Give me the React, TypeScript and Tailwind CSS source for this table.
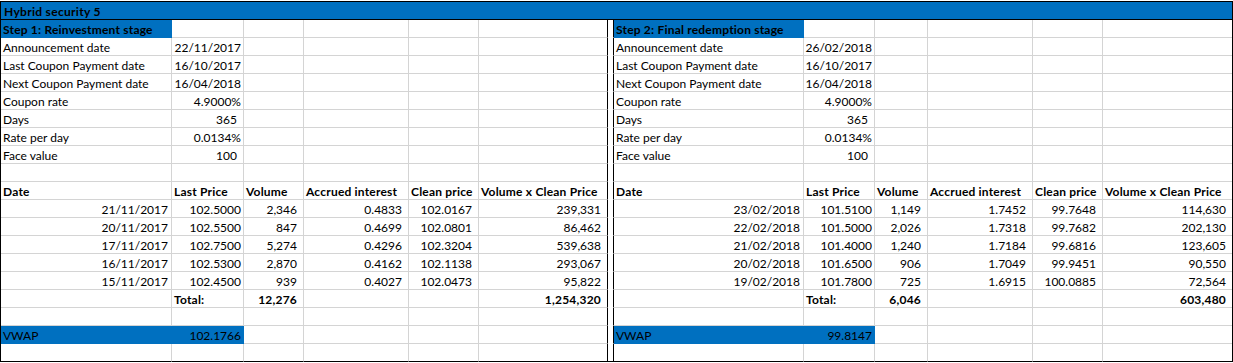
import React from "react";

type Cell = { t?: string; k?: "l" | "d" | "n" | "p"; b?: boolean; f?: boolean };

const E: Cell = {};
const l = (t: string, b = false, f = false): Cell => ({ t, k: "l", b, f });
const d = (t: string, b = false, f = false): Cell => ({ t, k: "d", b, f });
const n = (t: string, b = false, f = false): Cell => ({ t, k: "n", b, f });
const p = (t: string, b = false, f = false): Cell => ({ t, k: "p", b, f });

const leftData = [
  ["21/11/2017", "102.5000", "2,346", "0.4833", "102.0167", "239,331"],
  ["20/11/2017", "102.5500", "847", "0.4699", "102.0801", "86,462"],
  ["17/11/2017", "102.7500", "5,274", "0.4296", "102.3204", "539,638"],
  ["16/11/2017", "102.5300", "2,870", "0.4162", "102.1138", "293,067"],
  ["15/11/2017", "102.4500", "939", "0.4027", "102.0473", "95,822"],
];
const rightData = [
  ["23/02/2018", "101.5100", "1,149", "1.7452", "99.7648", "114,630"],
  ["22/02/2018", "101.5000", "2,026", "1.7318", "99.7682", "202,130"],
  ["21/02/2018", "101.4000", "1,240", "1.7184", "99.6816", "123,605"],
  ["20/02/2018", "101.6500", "906", "1.7049", "99.9451", "90,550"],
  ["19/02/2018", "101.7800", "725", "1.6915", "100.0885", "72,564"],
];

function half(
  step: string,
  ann: string,
  data: string[][],
  total: string,
  sum: string,
  vwap: string
): Cell[][] {
  const rows: Cell[][] = [];
  rows.push([l(step, true, true), E, E, E, E, E]);
  rows.push([l("Announcement date"), p(ann), E, E, E, E]);
  rows.push([l("Last Coupon Payment date"), p("16/10/2017"), E, E, E, E]);
  rows.push([l("Next Coupon Payment date"), p("16/04/2018"), E, E, E, E]);
  rows.push([l("Coupon rate"), p("4.9000%"), E, E, E, E]);
  rows.push([l("Days"), n("365"), E, E, E, E]);
  rows.push([l("Rate per day"), p("0.0134%"), E, E, E, E]);
  rows.push([l("Face value"), n("100"), E, E, E, E]);
  rows.push([E, E, E, E, E, E]);
  rows.push([
    l("Date", true),
    l("Last Price", true),
    l("Volume", true),
    l("Accrued interest", true),
    l("Clean price", true),
    l("Volume x Clean Price", true),
  ]);
  data.forEach((r) => rows.push([d(r[0]), p(r[1]), n(r[2]), n(r[3]), n(r[4]), n(r[5])]));
  rows.push([E, l("Total:", true), n(total, true), E, E, n(sum, true)]);
  rows.push([E, E, E, E, E, E]);
  rows.push([l("VWAP", false, true), p(vwap, false, true), E, E, E, E]);
  rows.push([E, E, E, E, E, E]);
  return rows;
}

const left = half("Step 1: Reinvestment stage", "22/11/2017", leftData, "12,276", "1,254,320", "102.1766");
const right = half("Step 2: Final redemption stage", "26/02/2018", rightData, "6,046", "603,480", "99.8147");

const rows: Cell[][] = left.map((r, i) => [...r, E, ...right[i]]);

function alignCls(k?: string) {
  if (k === "l") return "justify-start pl-[2px]";
  if (k === "d") return "justify-end pr-[3px]";
  if (k === "n") return "justify-end pr-[6px]";
  if (k === "p") return "justify-end pr-[2px]";
  return "";
}

function rightBorder(ci: number, fill: boolean) {
  if (ci === 12) return "";
  if (fill) return "border-r border-r-[#0070c0]";
  if (ci === 5 || ci === 6) return "border-r border-r-black";
  return "border-r border-r-[#d4d4d4]";
}

function bottomBorder(ri: number, ci: number, fill: boolean) {
  if (ri === rows.length - 1) return "border-b border-b-black";
  if (fill) return "border-b border-b-[#0070c0]";
  if (ci === 6) return "border-b border-b-white";
  return "border-b border-b-[#d4d4d4]";
}

export default function App() {
  return (
    <div className="w-[1233px] h-[363px] bg-white pt-[1px] text-[12px] text-black font-[family-name:Lato,sans-serif]">
      <div className="border-x border-black">
        <div className="h-[19px] border-y border-black bg-[#0070c0] pl-[3px] pt-[1px] leading-[17px] font-bold tracking-[0.3px] whitespace-nowrap">
          Hybrid security 5
        </div>
        <div className="grid grid-cols-[171px_72px_60px_105px_70px_129px_6px_190px_71px_53px_105px_70px_129px]">
          {rows.map((r, ri) =>
            r.map((c, ci) => (
              <div
                key={ri + "-" + ci}
                className={
                  "flex h-[18px] pt-[1px] leading-[17px] whitespace-nowrap " +
                  rightBorder(ci, !!c.f) +
                  " " +
                  bottomBorder(ri, ci, !!c.f) +
                  " " +
                  (c.f ? "bg-[#0070c0] " : "") +
                  (c.b ? "font-bold tracking-[0.2px] " : "") +
                  alignCls(c.k)
                }
              >
                {c.t ?? ""}
              </div>
            ))
          )}
        </div>
      </div>
    </div>
  );
}
